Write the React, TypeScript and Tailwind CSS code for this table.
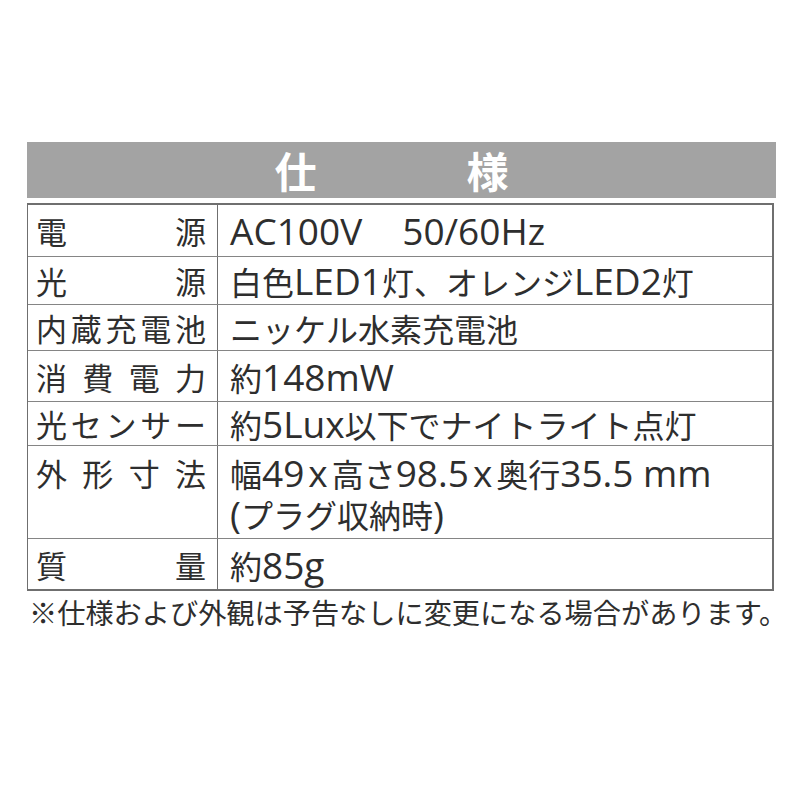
import React from "react";

const font = { fontFamily: '"Noto Sans CJK JP", "Noto Sans", sans-serif' };
const latin = { fontFamily: '"Open Sans", "Noto Sans CJK JP", sans-serif' };

function L({ children, className = "" }: { children: React.ReactNode; className?: string }) {
  return (
    <span className={`text-[37px] font-[370] ${className}`} style={latin}>
      {children}
    </span>
  );
}

function Label({ chars }: { chars: string[] }) {
  return (
    <div className="flex justify-between w-full">
      {chars.map((c, i) => (
        <span key={i}>{c}</span>
      ))}
    </div>
  );
}

type Row = { label: string[]; value: React.ReactNode; h: string; top?: boolean };

const rows: Row[] = [
  {
    label: ["電", "源"],
    value: (
      <span>
        <L>AC100V</L>
        <span className="inline-block w-[40px]" />
        <L>50/60Hz</L>
      </span>
    ),
    h: "h-[51px]",
  },
  {
    label: ["光", "源"],
    value: (
      <span>
        白色<L>LED1</L>灯、オレンジ<L>LED2</L>灯
      </span>
    ),
    h: "h-[48px]",
  },
  { label: ["内", "蔵", "充", "電", "池"], value: <span>ニッケル水素充電池</span>, h: "h-[46px]" },
  {
    label: ["消", "費", "電", "力"],
    value: (
      <span>
        約<L>148mW</L>
      </span>
    ),
    h: "h-[51px]",
  },
  {
    label: ["光", "セ", "ン", "サ", "ー"],
    value: (
      <span>
        約<L>5Lux</L>以下でナイトライト点灯
      </span>
    ),
    h: "h-[44px]",
  },
  {
    label: ["外", "形", "寸", "法"],
    value: (
      <div className="flex flex-col">
        <div className="h-[41px] flex items-center whitespace-nowrap leading-none">
          <span>
            幅<L>49</L>
            <L className="mx-[4px]">x</L>高さ<L>98.5</L>
            <L className="mx-[4px]">x</L>奥行<L>35.5 mm</L>
          </span>
        </div>
        <div className="h-[41px] flex items-center whitespace-nowrap leading-none">
          <span>
            <L>(</L>プラグ収納時<L>)</L>
          </span>
        </div>
      </div>
    ),
    h: "h-[93px]",
    top: true,
  },
  {
    label: ["質", "量"],
    value: (
      <span>
        約<L>85g</L>
      </span>
    ),
    h: "h-[51px]",
  },
];

export default function App() {
  return (
    <div className="w-[800px] h-[800px] bg-white text-[#2e2e2e]" style={font}>
      <div className="pt-[142px] pl-[27px]">
        <div className="w-[749px] h-[56px] bg-[#a3a3a3] flex items-center justify-center gap-[150px] pr-[20px]">
          <span className="text-white font-bold text-[42px] leading-none">仕</span>
          <span className="text-white font-bold text-[42px] leading-none">様</span>
        </div>
        <div className="mt-[5px] w-[747px] border-2 border-[#6f6f6f] border-l-[1.5px] flex flex-col">
          {rows.map((r, i) => (
            <div
              key={i}
              className={`flex ${r.h} ${i > 0 ? "border-t-[1.5px] border-[#858585]" : ""}`}
            >
              <div
                className={`w-[190px] shrink-0 border-r-[1.5px] border-[#6f6f6f] pl-[8px] pr-[11px] flex text-[31px] leading-none ${
                  r.top ? "items-start pt-[6px]" : "items-center"
                }`}
              >
                {r.top ? (
                  <div className="h-[41px] flex items-center w-full">
                    <Label chars={r.label} />
                  </div>
                ) : (
                  <Label chars={r.label} />
                )}
              </div>
              <div
                className={`flex-1 pl-[12px] flex text-[32px] whitespace-nowrap leading-none ${
                  r.top ? "items-start pt-[6px]" : "items-center"
                }`}
              >
                {r.value}
              </div>
            </div>
          ))}
        </div>
        <div className="mt-[3px] ml-[2px] text-[28.2px] leading-[36px] whitespace-nowrap">
          ※仕様および外観は予告なしに変更になる場合があります。
        </div>
      </div>
    </div>
  );
}
